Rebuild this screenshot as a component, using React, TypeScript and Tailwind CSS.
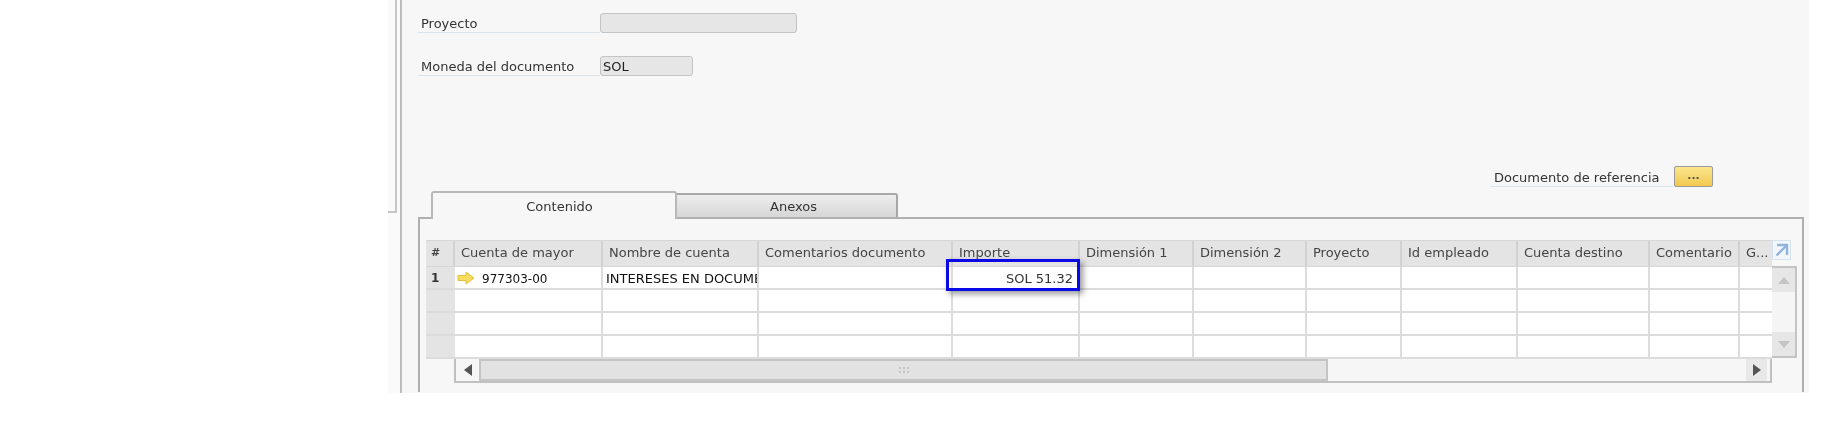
const font = "font-['DejaVu_Sans',sans-serif]";

const headers = ["#", "Cuenta de mayor", "Nombre de cuenta", "Comentarios documento", "Importe", "Dimensión 1", "Dimensión 2", "Proyecto", "Id empleado", "Cuenta destino", "Comentario", "G..."];
const gridCols = "grid grid-rows-[23px] grid-cols-[29px_148px_156px_194px_127px_114px_113px_95px_116px_132px_90px_32px]";
const headerCols = "grid grid-rows-[25px] grid-cols-[29px_148px_156px_194px_127px_114px_113px_95px_116px_132px_90px_32px]";

function Field({ label, value, inputW, labelW }: { label: string; value?: string; inputW: string; labelW: string }) {
  return (
    <div className="flex items-end">
      <div className={`${labelW} h-[20px] border-b border-[#dbe3ea] pl-[3px] text-[13px] leading-[22px] text-[#333] whitespace-nowrap`}>{label}</div>
      <div className={`${inputW} h-[20px] rounded-[3px] border border-[#c4c4c4] bg-[#e6e6e6] pl-[2px] text-[13px] leading-[20px] text-[#222]`}>{value}</div>
    </div>
  );
}

function Arrow() {
  return (
    <svg width="18" height="14" viewBox="0 0 18 14" className="shrink-0">
      <path d="M1 4.5H9V1L17 7L9 13V9.5H1Z" fill="#f7dc5e" stroke="#e2bf3e" strokeWidth="1" />
    </svg>
  );
}

function Row({ first }: { first?: boolean }) {
  return (
    <div className={`${gridCols} h-[23px]`}>
      <div className="h-[23px] border-b-2 border-[#dcdcdc] bg-[#e4e4e4] pl-[5px] text-[12px] leading-[23px] font-bold text-[#333]">{first ? "1" : ""}</div>
      {headers.slice(1).map((h, i) => (
        <div key={h} className="relative h-[23px] border-b-2 border-r-2 border-[#dcdcdc] bg-white text-[13px] leading-[23px] whitespace-nowrap text-[#111] last:border-r-0">
          {first && i === 0 && (
            <div className="flex h-[21px] items-center gap-[7px] pl-[2px] text-[12px]">
              <Arrow />
              <span className="pt-[3px]">977303-00</span>
            </div>
          )}
          {first && i === 1 && <div className="h-[21px] overflow-hidden pl-[3px]">INTERESES EN DOCUMENTOS</div>}
          {first && i === 3 && (
            <div className="absolute -top-[8px] -left-[7px] z-10 h-[32px] w-[134px] border-[3px] border-[#0a0ae6] pr-[4px] pt-[6px] text-right leading-[22px] text-[#333] shadow-[3px_3px_6px_rgba(0,0,0,0.4)]">
              SOL 51.32
            </div>
          )}
        </div>
      ))}
    </div>
  );
}

export default function App() {
  return (
    <div className={`flex h-[423px] w-[1823px] overflow-hidden bg-white ${font}`}>
      <div className="w-[388px] shrink-0" />
      <div className="h-[393px] w-[12px] shrink-0 bg-[#fafafa]">
        <div className="h-[213px] w-[9px] border-r-2 border-b-2 border-[#c6c6c6]" />
      </div>
      <main className="flex h-[393px] w-[1409px] shrink-0 flex-col border-l-2 border-[#bdbdbd] bg-[#f7f7f7] pl-[16px] pt-[13px] blur-[0.4px]">
        <Field label="Proyecto" labelW="w-[182px]" inputW="w-[197px]" />
        <div className="mt-[23px]">
          <Field label="Moneda del documento" value="SOL" labelW="w-[182px]" inputW="w-[93px]" />
        </div>
        <div className="mt-[90px] flex justify-end pr-[96px]">
          <div className="flex items-end">
            <div className="h-[20px] w-[183px] border-b border-[#dbe3ea] pl-[3px] text-[13px] leading-[21px] text-[#333]">Documento de referencia</div>
            <div className="flex h-[21px] w-[39px] items-center justify-center rounded-[2px] border border-[#9a9a9a] bg-gradient-to-b from-[#fbe68c] to-[#f1c94e] pb-[3px] text-[11px] font-bold leading-none text-[#555]">...</div>
          </div>
        </div>
        <div className="mt-[4px] flex h-[26px] items-end pl-[13px]">
          <div className="relative z-10 -mb-[2px] flex h-[28px] w-[246px] items-center justify-center rounded-t-[3px] border-x-2 border-t-2 border-[#b8b8b8] bg-[#f7f7f7] pl-[11px] pt-[2px] text-[13px] text-[#333]">Contenido</div>
          <div className="flex h-[24px] w-[221px] items-center justify-center rounded-tr-[3px] border-t-2 border-r-2 border-[#a8a8a8] bg-gradient-to-b from-[#ededed] to-[#d6d6d6] pl-[14px] pt-[2px] text-[13px] text-[#333]">Anexos</div>
        </div>
        <div className="flex h-[175px] w-[1386px] flex-col border-x-2 border-t-2 border-[#b0b0b0] pl-[6px] pt-[21px]">
          <div className="flex">
            <div className="w-[1346px]">
              <div className={`${headerCols} h-[27px] border-y border-[#d6d6d6] bg-[#e4e4e4]`}>
                {headers.map((h, i) => (
                  <div key={h} className={`h-[25px] border-r-2 border-[#d2d2d2] leading-[24px] text-[#444] whitespace-nowrap last:border-r-0 ${i === 0 ? "pl-[5px] text-[11px] font-bold" : "pl-[6px] text-[13px]"}`}>{h}</div>
                ))}
              </div>
              <Row first />
              <Row />
              <Row />
              <Row />
            </div>
            <div className="flex w-[26px] flex-col items-start">
              <div className="flex h-[20px] w-[19px] items-center justify-center border border-[#d5e2f0] bg-[#f2f6fa]">
                <svg width="15" height="15" viewBox="0 0 15 15">
                  <path d="M3 2H13V12M12.5 2.5L2.5 12.5" fill="none" stroke="#8fb4de" strokeWidth="2.4" />
                </svg>
              </div>
              <div className="mt-[6px] flex h-[92px] w-[25px] flex-col justify-between border-y-2 border-r-2 border-[#c4c4c4] bg-[#f5f5f5]">
                <div className="flex h-[24px] items-center justify-center bg-[#e6e6e6]">
                  <svg width="12" height="7" viewBox="0 0 12 7"><path d="M6 0L12 7H0Z" fill="#c4c4c4" /></svg>
                </div>
                <div className="flex h-[24px] items-center justify-center bg-[#e6e6e6]">
                  <svg width="12" height="7" viewBox="0 0 12 7"><path d="M0 0H12L6 7Z" fill="#c4c4c4" /></svg>
                </div>
              </div>
            </div>
          </div>
          <div className="ml-[28px] flex h-[24px] w-[1318px] items-stretch border-r-2 border-b-2 border-l-2 border-[#c0c0c0] bg-[#f6f6f6] pr-[3px]">
            <div className="flex w-[23px] items-center justify-center">
              <svg width="8" height="12" viewBox="0 0 8 12"><path d="M8 0V12L0 6Z" fill="#555" /></svg>
            </div>
            <div className="flex w-[849px] items-center justify-center border-2 border-[#c4c4c4] bg-[#e2e2e2]">
              <div className="grid grid-cols-3 gap-[2px]">
                {[0, 1, 2, 3, 4, 5].map((d) => <span key={d} className="h-[2px] w-[2px] bg-[#c6c6c6]" />)}
              </div>
            </div>
            <div className="flex-1" />
            <div className="flex w-[21px] items-center justify-center bg-[#e8e8e8]">
              <svg width="8" height="12" viewBox="0 0 8 12"><path d="M0 0V12L8 6Z" fill="#555" /></svg>
            </div>
          </div>
        </div>
      </main>
    </div>
  );
}
